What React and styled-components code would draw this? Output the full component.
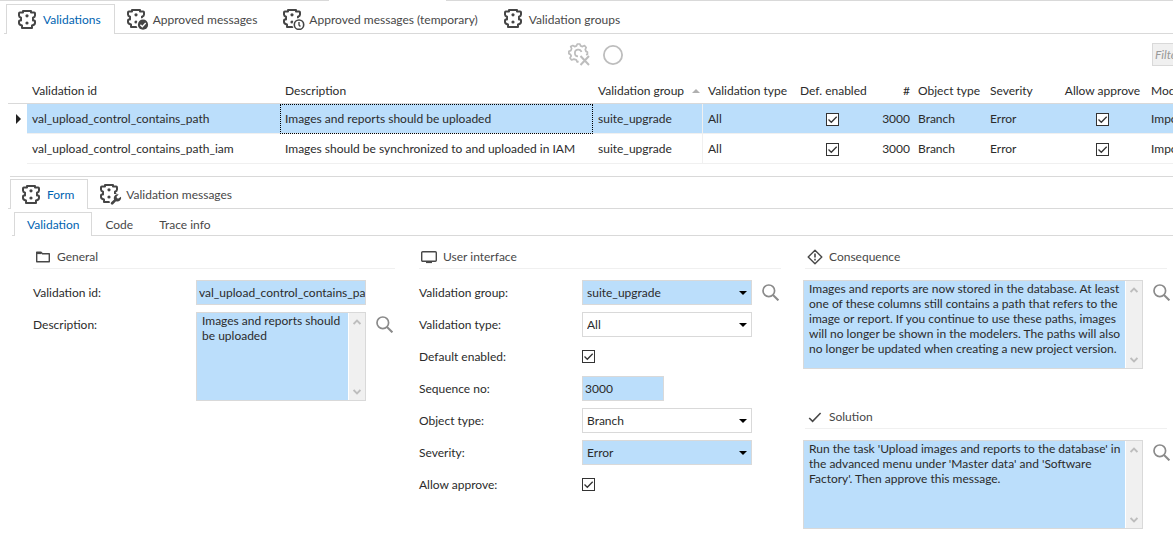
import React from "react";
import styled, { createGlobalStyle, css } from "styled-components";

const color = {
  text: "#2b2b2b",
  muted: "#484848",
  active: "#0063b1",
  line: "#d9d9d9",
  faint: "#f0f0f0",
  fill: "#bbdefb",
};

const GlobalStyle = createGlobalStyle`
  *, *::before, *::after { box-sizing: border-box; }
  body {
    margin: 0;
    background: #fff;
    color: ${color.text};
    font: 12px/15px Lato, "Open Sans", sans-serif;
    overflow-x: hidden;
  }
  button, input, select, textarea { font: inherit; color: inherit; margin: 0; border-radius: 0; outline: none; }
`;

/* ---------- icons ---------- */

const Svg = styled.svg`
  display: block;
  flex: none;
  fill: none;
  stroke: currentColor;
`;

const BODY = "M5 1H13V2.6H16.2Q17 2.6 17 3.4V5.4Q17 7 15 7.8V10.6H16.2Q17 10.6 17 11.4V13Q17 14.8 14 15.4V18H4V15.4Q1 14.8 1 13V11.4Q1 10.6 1.8 10.6H3V7.8Q1 7 1 5.4V3.4Q1 2.6 1.8 2.6H5Z";

function ValidationIcon({ badge }) {
  const width = badge ? 22 : 21;
  return (
    <Svg width={width} height="22" viewBox={`0 -1 ${width} 22`} color="#454545" aria-hidden="true">
      <path d={BODY} strokeWidth="2" strokeLinejoin="round" />
      <circle cx="9" cy="5.8" r="1.6" fill="currentColor" stroke="none" />
      <circle cx="9" cy="13" r="1.6" fill="currentColor" stroke="none" />
      {badge && badge !== "wrench" && <circle cx="16" cy="15.7" r="6.6" fill="#fff" stroke="none" />}
      {badge === "check" && (
        <>
          <circle cx="16" cy="15.7" r="5.1" fill="currentColor" stroke="none" />
          <path d="M13.4 15.8l1.9 1.9 3.4-3.7" stroke="#fff" strokeWidth="1.4" />
        </>
      )}
      {badge === "clock" && (
        <>
          <circle cx="16" cy="15.7" r="4.7" strokeWidth="1.6" />
          <path d="M16 13v3l1.4 1.4" strokeWidth="1.4" />
        </>
      )}
      {badge === "wrench" && (
        <>
          <path d="M10.5 22L9.5 17 14 10h8v12z" fill="#fff" stroke="none" />
          <path
            d="M20.9 12.7a3.7 3.7 0 0 1-4.9 4.6l-2.9 2.9a1.3 1.3 0 0 1-1.9-1.9l2.9-2.9a3.7 3.7 0 0 1 4.6-4.9l-2.1 2.1.3 1.6 1.6.3z"
            fill="currentColor"
            stroke="none"
          />
        </>
      )}
    </Svg>
  );
}

const GearOffIcon = () => (
  <Svg width="22" height="23" viewBox="0 0 22 23" strokeWidth="1.7" aria-hidden="true">
    <path
      d="M10.6 18.4L9.2 19 8.3 16.9 5.9 16.1 3.6 17 2 14.9 3.2 13 2.4 11.4.9 10.8V8.2L2.9 7.6 3.6 5.5 2.7 3.6 4.8 2.6 6.6 3.6 8.5 2.9 9.3 1h2.6l.7 1.9 1.9.7 2-1 1.7 1.9-.9 1.9.7 2 1.4.6v2.4L18 11.8"
      strokeLinejoin="round"
    />
    <path d="M10 13.4A3.4 3.4 0 1 1 13.5 9" />
    <path d="M12.5 13l8.5 9M21 13l-8.5 9" strokeWidth="2" />
  </Svg>
);

const CircleIcon = () => (
  <Svg width="22" height="22" viewBox="0 0 22 22" strokeWidth="1.8" aria-hidden="true">
    <circle cx="11" cy="11" r="9.1" />
  </Svg>
);

const SearchIcon = () => (
  <Svg width="17" height="17" viewBox="0 0 17 17" strokeWidth="1.7" aria-hidden="true">
    <circle cx="6.8" cy="6.8" r="5.8" />
    <path d="M11 11l5.4 5.4" strokeWidth="2" />
  </Svg>
);

const FolderIcon = () => (
  <Svg width="18" height="16" viewBox="0 0 18 16" strokeWidth="1.4" aria-hidden="true">
    <path d="M3.7 12.8V3.2H8l1.4 1.5h6.9v8.1z" strokeLinejoin="round" />
    <path d="M3.7 4.4h4.6" />
  </Svg>
);

const MonitorIcon = () => (
  <Svg width="18" height="16" viewBox="0 0 18 16" strokeWidth="1.4" aria-hidden="true">
    <rect x="2.7" y="2.7" width="14.6" height="9.6" rx="1" />
    <path d="M7 13.2h6" strokeWidth="1.8" />
  </Svg>
);

const WarningIcon = () => (
  <Svg width="18" height="16" viewBox="0 0 18 16" strokeWidth="1.4" aria-hidden="true">
    <path d="M10 1.2L16.8 8 10 14.8 3.2 8z" strokeLinejoin="round" />
    <path d="M10 4.6v4M10 9.8v1.6" strokeWidth="1.6" />
  </Svg>
);

const TickIcon = () => (
  <Svg width="18" height="16" viewBox="0 0 18 16" strokeWidth="1.6" aria-hidden="true">
    <path d="M4.2 9l3.4 3.4L15.6 4" />
  </Svg>
);

/* ---------- tabs ---------- */

const TabBar = styled.nav`
  display: flex;
  align-items: stretch;
  margin-left: ${(p) => p.$inset}px;
  padding-left: 2px;
  border-bottom: 1px solid ${color.line};
`;

const Tab = styled.button`
  display: flex;
  align-items: center;
  gap: 4px;
  height: ${(p) => (p.$small ? 23 : 29)}px;
  padding: ${(p) => (p.$small ? "0 12px" : "0 13px 0 11px")};
  border: 1px solid transparent;
  border-bottom: 0;
  background: #fff;
  color: ${color.muted};
  white-space: nowrap;
  ${(p) =>
    p.$active &&
    css`
      height: ${p.$small ? 24 : 30}px;
      margin-bottom: -1px;
      border-color: ${color.line};
      color: ${color.active};
    `}
`;

function Tabs({ inset, small, items, label }) {
  return (
    <TabBar $inset={inset} role="tablist" aria-label={label}>
      {items.map(([text, icon], i) => (
        <Tab key={text} type="button" role="tab" aria-selected={i === 0} $active={i === 0} $small={small}>
          {icon !== undefined && <ValidationIcon badge={icon} />}
          {text}
        </Tab>
      ))}
    </TabBar>
  );
}

/* ---------- page frame and toolbar ---------- */

const Page = styled.main`
  min-height: 100vh;
  overflow: hidden;
`;

const ParentStrip = styled.div`
  display: grid;
  grid-template-columns: 329px 117px 1fr;
  height: 4px;
`;

const StripLine = styled.div`
  border-top: 1px solid ${color.line};
  &:last-child { grid-column: 3; }
`;

const Toolbar = styled.div`
  display: grid;
  grid-template-columns: minmax(0, 1fr) auto minmax(0, 1fr);
  align-items: center;
  padding: 9px 0 12px 18px;
`;

const ToolGroup = styled.div`
  grid-column: 2;
  display: flex;
  gap: 12px;
`;

const IconButton = styled.button`
  display: block;
  padding: 0;
  border: 0;
  background: none;
  color: ${(p) => (p.$pale ? "#bdbdbd" : "#8a8a8a")};
`;

const Filter = styled.input`
  justify-self: end;
  width: 160px;
  height: 23px;
  margin-right: -139px;
  padding: 0 2px;
  border: 1px solid ${color.line};
  background: ${color.faint};
  font-style: italic;
  &::placeholder { color: #999; opacity: 1; }
`;

/* ---------- checkbox ---------- */

const CheckWrap = styled.span`
  display: inline-grid;
  vertical-align: middle;
  > * { grid-area: 1 / 1; }
  > svg { pointer-events: none; }
`;

const CheckInput = styled.input`
  appearance: none;
  width: 13px;
  height: 13px;
  border: 1px solid #333;
  background: #fff;
`;

function Check(props) {
  return (
    <CheckWrap>
      <CheckInput type="checkbox" defaultChecked {...props} />
      <Svg width="13" height="13" viewBox="0 0 13 13" strokeWidth="1.3" color="#333" aria-hidden="true">
        <path d="M2.5 6.5l2.8 2.8 5.4-5.6" />
      </Svg>
    </CheckWrap>
  );
}

/* ---------- grid ---------- */

const Grid = styled.table`
  width: calc(100% - 8px);
  margin-left: 8px;
  table-layout: fixed;
  border-collapse: separate;
  border-spacing: 0;
`;

const Col = styled.col`
  width: ${(p) => (p.$w ? `${p.$w}px` : "auto")};
`;

const HeadCell = styled.th`
  height: 26px;
  padding: 0 3px 0 5px;
  border-bottom: 1px solid ${color.line};
  font-weight: 400;
  text-align: ${(p) => p.$align || "left"};
  white-space: nowrap;
`;

const SortHeader = styled.span`
  display: flex;
  align-items: center;
  justify-content: space-between;
`;

const Cell = styled.td`
  height: 30px;
  padding: 0 3px 0 5px;
  border-bottom: 1px solid ${color.faint};
  ${(p) => p.$divider && `border-right: 1px solid ${color.faint};`}
  background: ${(p) => (p.$selected ? color.fill : "#fff")};
  text-align: ${(p) => p.$align || "left"};
  white-space: nowrap;
  ${(p) => p.$focused && "outline: 1px dotted #000; outline-offset: -1px;"}
`;

const Marker = styled.td`
  padding-left: 8px;
`;

const columns = [
  { key: "id", title: "Validation id", w: 253 },
  { key: "description", title: "Description", w: 313 },
  { key: "group", title: "Validation group", w: 110, sorted: true },
  { key: "type", title: "Validation type", w: 92 },
  { key: "enabled", title: "Def. enabled", w: 72, align: "center", check: true },
  { key: "seq", title: "#", w: 46, align: "right" },
  { key: "object", title: "Object type", w: 72 },
  { key: "severity", title: "Severity", w: 72 },
  { key: "approve", title: "Allow approve", w: 89, align: "center", check: true },
  { key: "model", title: "Model" },
];

const shared = { group: "suite_upgrade", type: "All", seq: "3000", object: "Branch", severity: "Error", model: "Import" };
const rows = [
  { ...shared, id: "val_upload_control_contains_path", description: "Images and reports should be uploaded" },
  { ...shared, id: "val_upload_control_contains_path_iam", description: "Images should be synchronized to and uploaded in IAM" },
];

function ValidationGrid() {
  return (
    <Grid>
      <colgroup>
        <Col $w={19} />
        {columns.map((c) => (
          <Col key={c.key} $w={c.w} />
        ))}
      </colgroup>
      <thead>
        <tr>
          <HeadCell aria-label="Current row" />
          {columns.map((c) => (
            <HeadCell key={c.key} scope="col" $align={c.align} aria-sort={c.sorted ? "ascending" : undefined}>
              {c.sorted ? (
                <SortHeader>
                  {c.title}
                  <Svg width="8" height="4" viewBox="0 0 8 4" aria-hidden="true">
                    <path d="M0 4L4 0l4 4z" fill="#b0b0b0" stroke="none" />
                  </Svg>
                </SortHeader>
              ) : (
                c.title
              )}
            </HeadCell>
          ))}
        </tr>
      </thead>
      <tbody>
        {rows.map((row, i) => (
          <tr key={row.id} aria-selected={i === 0}>
            <Marker>
              {i === 0 && (
                <Svg width="5" height="10" viewBox="0 0 5 10" aria-hidden="true">
                  <path d="M0 0l5 5-5 5z" fill="#222" stroke="none" />
                </Svg>
              )}
            </Marker>
            {columns.map((c) => (
              <Cell
                key={c.key}
                $align={c.align}
                $selected={i === 0}
                $divider={c.sorted}
                $focused={i === 0 && c.key === "description"}
              >
                {c.check ? <Check aria-label={`${c.title}, ${row.id}`} /> : row[c.key]}
              </Cell>
            ))}
          </tr>
        ))}
      </tbody>
    </Grid>
  );
}

/* ---------- form ---------- */

const Detail = styled.section`
  margin: 12px 0 0 10px;
  padding-top: 2px;
  border-top: 1px solid ${color.line};
`;

const DetailTabs = styled.div`
  margin-left: -2px;
`;

const SubTabs = styled.div`
  margin: 3px 0 0 2px;
`;

const Form = styled.form`
  display: grid;
  grid-template-columns: repeat(3, minmax(0, 1fr));
  gap: 24px;
  align-items: start;
  padding: 12px 6px 12px 23px;
`;

const Column = styled.div`
  display: grid;
  gap: 39px;
`;

const Group = styled.section`
  display: grid;
  gap: 7px;
`;

const GroupTitle = styled.h2`
  display: flex;
  align-items: center;
  gap: 6px;
  height: 21px;
  margin: 0 0 4px;
  padding-bottom: 3px;
  border-bottom: 1px solid ${color.faint};
  color: ${color.muted};
  font-size: 12px;
  font-weight: 400;
`;

const Field = styled.div`
  display: grid;
  grid-template-columns: 163px minmax(0, 1fr) 19px;
  column-gap: 10px;
  align-items: start;
`;

const FieldLabel = styled.label`
  line-height: 25px;
  margin-right: -10px;
`;

const Control = styled.div`
  display: flex;
  align-items: center;
  min-height: 25px;
  margin-left: -10px;
`;

const LookupSlot = styled.div`
  padding-top: 4px;
`;

const TextBox = styled.input`
  width: ${(p) => (p.$short ? "82px" : "100%")};
  height: 25px;
  padding: 0 0 0 2px;
  border: 1px solid ${color.line};
  background: ${color.fill};
`;

const SelectWrap = styled.span`
  display: grid;
  flex: 1;
  align-items: center;
  > * { grid-area: 1 / 1; }
  > svg { justify-self: end; margin-right: 5px; pointer-events: none; }
`;

const SelectBox = styled.select`
  appearance: none;
  width: 100%;
  height: 25px;
  padding: 0 16px 0 4px;
  border: 1px solid ${color.line};
  background: ${(p) => (p.$filled ? color.fill : "#fff")};
`;

const MemoFrame = styled.div`
  display: flex;
  flex: 1;
  height: 89px;
  border: 1px solid ${color.line};
`;

const MemoText = styled.textarea`
  flex: 1;
  min-width: 0;
  padding: 0 0 0 5px;
  border: 0;
  background: ${color.fill};
  resize: none;
  overflow: hidden;
`;

const ScrollTrack = styled.div`
  display: flex;
  flex-direction: column;
  align-items: center;
  justify-content: space-between;
  width: 17px;
  padding: 6px 0 5px;
  border-left: 1px solid #fff;
  background: ${color.faint};
  color: #bdbdbd;
`;

const WideField = styled.div`
  display: flex;
  align-items: flex-start;
  gap: 10px;
  margin: 0 -3px 0 -2px;
`;

function Memo(props) {
  return (
    <MemoFrame>
      <MemoText {...props} />
      <ScrollTrack aria-hidden="true">
        <Svg width="8" height="6" viewBox="0 0 8 6" strokeWidth="1.8">
          <path d="M.6 5L4 1.6 7.4 5" />
        </Svg>
        <Svg width="8" height="6" viewBox="0 0 8 6" strokeWidth="1.8">
          <path d="M.6 1L4 4.4 7.4 1" />
        </Svg>
      </ScrollTrack>
    </MemoFrame>
  );
}

function Lookup({ label }) {
  return (
    <LookupSlot>
      <IconButton type="button" aria-label={label}>
        <SearchIcon />
      </IconButton>
    </LookupSlot>
  );
}

function Row({ id, label, lookup, children }) {
  return (
    <Field>
      <FieldLabel htmlFor={id}>{label}:</FieldLabel>
      <Control>{children}</Control>
      {lookup && <Lookup label={`Look up ${label}`} />}
    </Field>
  );
}

function Choice({ id, value, filled }) {
  return (
    <SelectWrap>
      <SelectBox id={id} defaultValue={value} $filled={filled}>
        <option>{value}</option>
      </SelectBox>
      <Svg width="8" height="4" viewBox="0 0 8 4" aria-hidden="true">
        <path d="M0 0h8L4 4z" fill="#000" stroke="none" />
      </Svg>
    </SelectWrap>
  );
}

function WideMemo({ title, icon, text }) {
  return (
    <Group>
      <GroupTitle>
        {icon}
        {title}
      </GroupTitle>
      <WideField>
        <Memo aria-label={title} defaultValue={text} />
        <Lookup label={`Look up ${title}`} />
      </WideField>
    </Group>
  );
}

export default function App() {
  return (
    <Page>
      <GlobalStyle />
      <ParentStrip>
        <StripLine />
        <StripLine />
      </ParentStrip>
      <Tabs
        inset={4}
        label="Validation screens"
        items={[
          ["Validations", null],
          ["Approved messages", "check"],
          ["Approved messages (temporary)", "clock"],
          ["Validation groups", null],
        ]}
      />
      <Toolbar>
        <ToolGroup>
          <IconButton type="button" $pale aria-label="Disable validation">
            <GearOffIcon />
          </IconButton>
          <IconButton type="button" $pale aria-label="Status">
            <CircleIcon />
          </IconButton>
        </ToolGroup>
        <Filter placeholder="Filter" aria-label="Filter" />
      </Toolbar>
      <ValidationGrid />
      <Detail>
        <DetailTabs>
          <Tabs
            inset={0}
            label="Detail screens"
            items={[
              ["Form", null],
              ["Validation messages", "wrench"],
            ]}
          />
        </DetailTabs>
        <SubTabs>
          <Tabs inset={0} small label="Form pages" items={[["Validation"], ["Code"], ["Trace info"]]} />
        </SubTabs>
        <Form>
          <Group>
            <GroupTitle>
              <FolderIcon />
              General
            </GroupTitle>
            <Row id="validation-id" label="Validation id">
              <TextBox id="validation-id" defaultValue="val_upload_control_contains_path" />
            </Row>
            <Row id="description" label="Description" lookup>
              <Memo id="description" defaultValue="Images and reports should be uploaded" />
            </Row>
          </Group>
          <Group>
            <GroupTitle>
              <MonitorIcon />
              User interface
            </GroupTitle>
            <Row id="group" label="Validation group" lookup>
              <Choice id="group" value="suite_upgrade" filled />
            </Row>
            <Row id="type" label="Validation type">
              <Choice id="type" value="All" />
            </Row>
            <Row id="enabled" label="Default enabled">
              <Check id="enabled" />
            </Row>
            <Row id="sequence" label="Sequence no">
              <TextBox id="sequence" $short defaultValue="3000" />
            </Row>
            <Row id="object" label="Object type">
              <Choice id="object" value="Branch" />
            </Row>
            <Row id="severity" label="Severity">
              <Choice id="severity" value="Error" filled />
            </Row>
            <Row id="approve" label="Allow approve">
              <Check id="approve" />
            </Row>
          </Group>
          <Column>
            <WideMemo
              title="Consequence"
              icon={<WarningIcon />}
              text="Images and reports are now stored in the database. At least one of these columns still contains a path that refers to the image or report. If you continue to use these paths, images will no longer be shown in the modelers. The paths will also no longer be updated when creating a new project version."
            />
            <WideMemo
              title="Solution"
              icon={<TickIcon />}
              text="Run the task 'Upload images and reports to the database' in the advanced menu under 'Master data' and 'Software Factory'. Then approve this message."
            />
          </Column>
        </Form>
      </Detail>
    </Page>
  );
}
